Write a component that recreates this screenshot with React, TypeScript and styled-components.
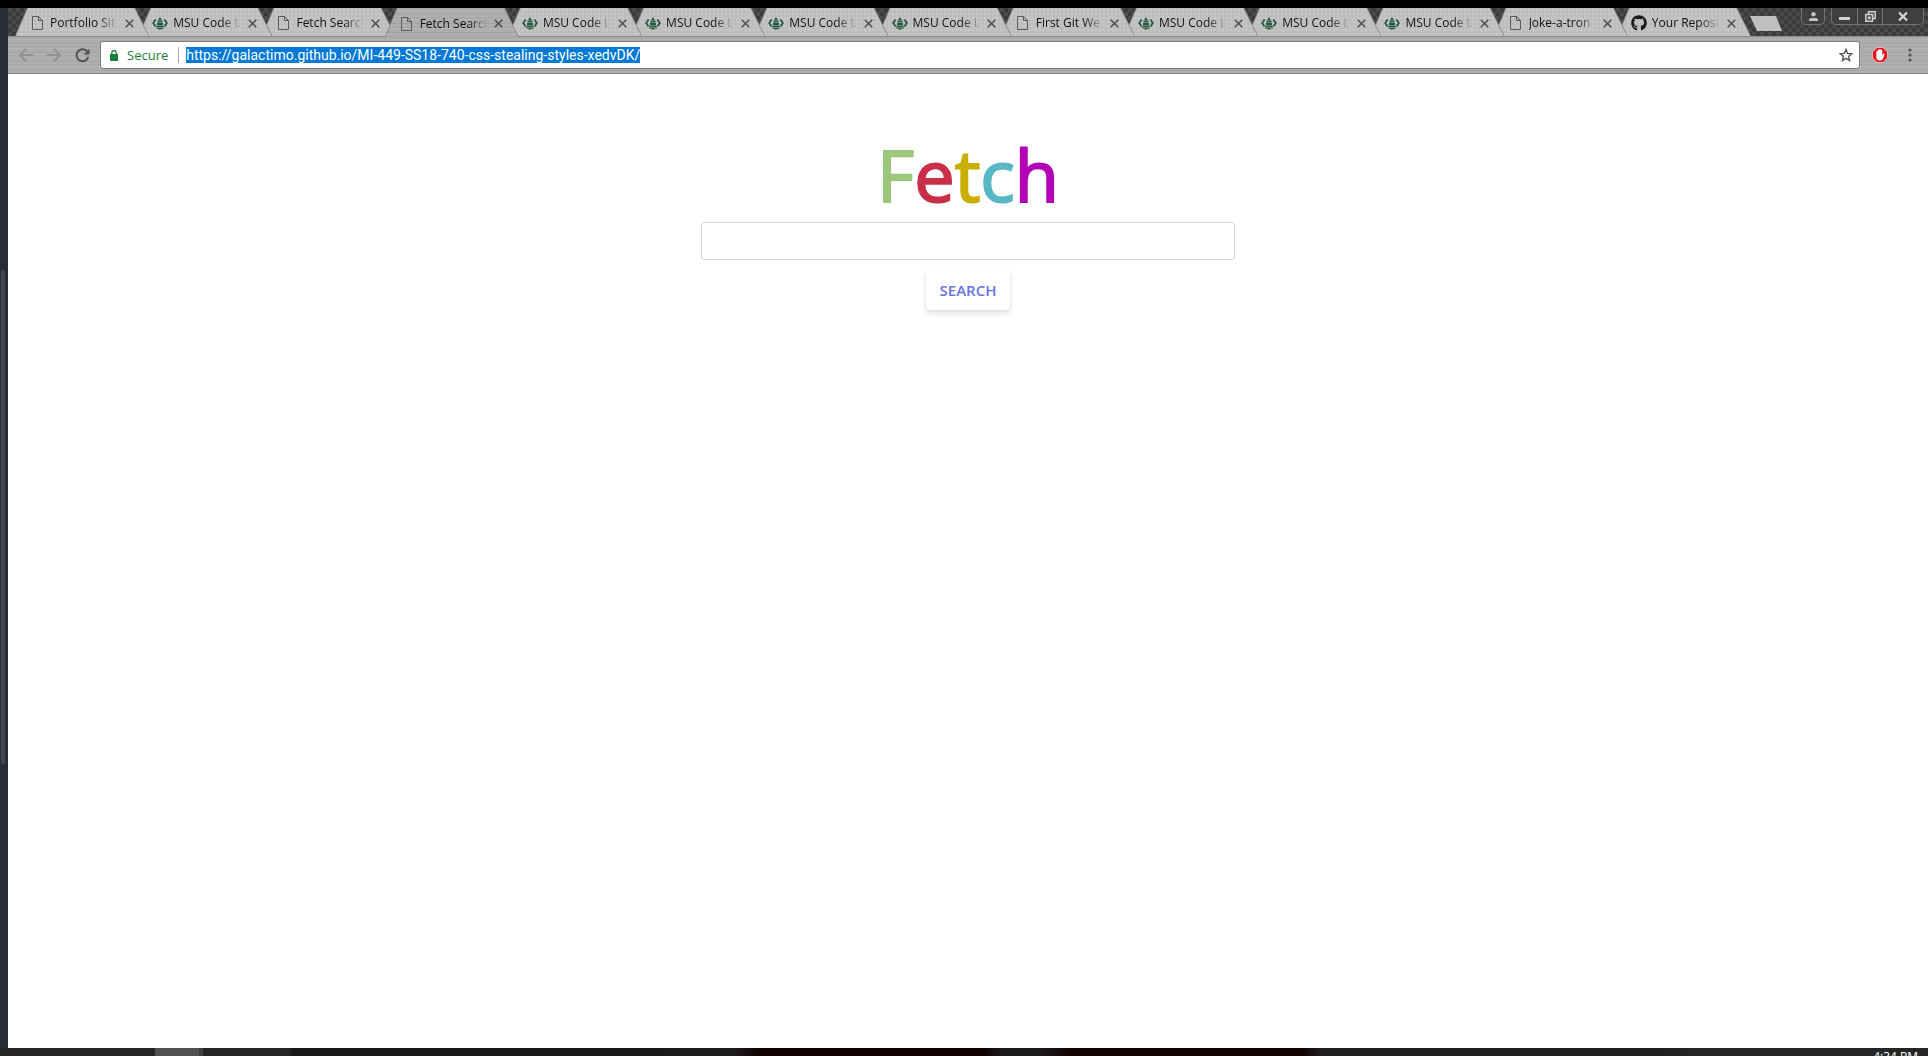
import React, { useEffect, useRef, useState } from "react";
import styled, { createGlobalStyle } from "styled-components";
import { FaGithub } from "react-icons/fa";

const ui = `"Open Sans", "Noto Sans", sans-serif`;

const GlobalStyle = createGlobalStyle`
  *, *::before, *::after { box-sizing: border-box; }
  body { margin: 0; background: #fff; font-family: ${ui}; }
  button { padding: 0; border: 0; background: none; font: inherit; color: inherit; display: flex; align-items: center; justify-content: center; }
  svg { display: block; flex: none; }
`;

const Screen = styled.div`
  display: flex;
  flex-direction: column;
  height: 100vh;
  overflow: hidden;
  padding-top: 8px;
  background: #000;
`;

const Desktop = styled.div`
  display: flex;
  flex: 1;
  min-height: 0;
`;

const EditorEdge = styled.aside`
  width: 8px;
  padding: 262px 3px 0 1px;
  background: #282c34;
`;

const ScrollThumb = styled.div`
  height: 495px;
  border-radius: 2px;
  background: #3e4451;
`;

const Browser = styled.div`
  display: flex;
  flex: 1;
  flex-direction: column;
  min-width: 0;
`;

const TabStrip = styled.header`
  display: flex;
  height: 29px;
  padding-left: 7px;
  border-bottom: 1px solid #8a8a8a;
  background: repeating-conic-gradient(#3b3b3b 0 25%, #4a4a4a 0 50%) 0 0 / 8px 8px;
`;

const Tabs = styled.nav`
  display: flex;
  flex: 1;
  max-width: 1736px;
  min-width: 0;
`;

const slant = "polygon(12px 0, calc(100% - 14px) 0, 100% 100%, 0 100%)";
const brushed = `repeating-linear-gradient(180deg, #a9a9a9 0 2px, #b3b3b3 2px 3px, #adadad 3px 6px, #a3a3a3 6px 7px, #b0b0b0 7px 9px)`;

const TabShape = styled.div<{ $active?: boolean; $order: number }>`
  position: relative;
  z-index: ${(p) => (p.$active ? 50 : p.$order)};
  flex: 1;
  min-width: 0;
  height: ${(p) => (p.$active ? 29 : 28)}px;
  margin-right: -11px;
  clip-path: ${slant};
  background: #8c8c8c;
  &:last-child { margin-right: 0; }
`;

const TabFace = styled.div<{ $active?: boolean }>`
  display: flex;
  align-items: center;
  height: 100%;
  margin: 0 1px;
  padding: 2px 14px 0 13px;
  clip-path: ${slant};
  background: ${(p) =>
    p.$active ? brushed : "radial-gradient(#c8c8c8 1px, #bebebe 1px) 0 0 / 4px 4px"};
`;

const TabIcon = styled.span`
  display: flex;
  justify-content: center;
  flex: none;
  width: 16px;
  margin-right: 5px;
`;

const TabTitle = styled.a`
  flex: 1;
  min-width: 0;
  margin-right: 4px;
  color: #111;
  font-size: 12px;
  line-height: 18px;
  text-decoration: none;
  white-space: nowrap;
  mask-image: linear-gradient(90deg, #000 48px, transparent 68px);
`;

const TabClose = styled.button`
  flex: none;
  width: 10px;
  height: 16px;
`;

const NewTab = styled.button`
  width: 32px;
  height: 15px;
  margin: 8px 0 0 -1px;
  clip-path: polygon(0 0, 26px 0, 100% 100%, 7px 100%);
  && { background: #bfbfbf; }
`;

const WindowControls = styled.div`
  display: flex;
  flex: none;
  gap: 6px;
  height: 17px;
  margin-left: auto;
  padding-right: 4px;
`;

const ControlGroup = styled.div`
  display: flex;
  overflow: hidden;
  border: 1px solid #747474;
  border-top: 0;
  border-radius: 0 0 5px 5px;
  background: #3f3f3f;
`;

const ControlButton = styled.button<{ $width: number }>`
  width: ${(p) => p.$width}px;
  & + & { border-left: 1px solid #747474; }
`;

const Toolbar = styled.div`
  display: flex;
  align-items: center;
  height: 37px;
  padding: 0 4px 0 10px;
  border-bottom: 1px solid #7c7c7c;
  background: ${brushed};
`;

const ToolButton = styled.button<{ $width?: number }>`
  flex: none;
  width: ${(p) => p.$width ?? 28}px;
  height: 28px;
`;

const AddressBar = styled.form`
  display: flex;
  align-items: center;
  flex: 1;
  min-width: 0;
  height: 28px;
  margin: 0 4px 0 10px;
  padding: 0 5px 0 9px;
  border: 1px solid #7d7d7d;
  border-radius: 3px;
  background: #fff;
`;

const Secure = styled.label`
  display: flex;
  align-items: center;
  gap: 9px;
  margin-right: 7px;
  padding-right: 10px;
  border-right: 1px solid #a8a8a8;
  color: #1a7f37;
  font-size: 13px;
  line-height: 16px;
`;

const Url = styled.input`
  flex: 1;
  min-width: 0;
  height: 20px;
  padding: 0;
  border: 0;
  outline: 0;
  background: none;
  color: #222;
  font-family: Roboto, ${ui};
  font-size: 14px;
  line-height: 19px;
  &::selection { background: #0078d7; color: #fff; }
`;

const Page = styled.main`
  display: flex;
  flex: 1;
  flex-direction: column;
  align-items: center;
  min-height: 0;
  padding-top: 52px;
  background: #fff;
`;

const Logo = styled.h1`
  margin: 0;
  font-size: 72px;
  font-weight: 400;
  line-height: 96px;
`;

const Letter = styled.span<{ $color: string }>`
  color: ${(p) => p.$color};
  -webkit-text-stroke: 2px ${(p) => p.$color};
`;

const SearchForm = styled.form`
  display: flex;
  flex-direction: column;
  align-items: center;
  gap: 10px;
  width: 100%;
`;

const SearchBox = styled.input`
  width: 534px;
  max-width: 90%;
  height: 38px;
  padding: 0 10px;
  border: 1px solid #d3d8d9;
  border-radius: 3px;
  font: inherit;
`;

const SearchButton = styled.button`
  && {
    height: 40px;
    padding: 0 14px;
    border-radius: 4px;
    background: #fff;
    box-shadow: 0 4px 6px rgba(50, 50, 93, 0.11), 0 1px 3px rgba(0, 0, 0, 0.08);
    color: #6772e5;
    font-size: 15px;
    font-weight: 600;
    text-transform: uppercase;
  }
`;

const Taskbar = styled.footer`
  display: flex;
  justify-content: space-between;
  height: 8px;
  padding: 0 10px 0 155px;
  overflow: hidden;
  background: linear-gradient(90deg, #262626 0 15%, #181818 15.2% 34%, #1d1d1d 36% 38%, #100002 39.5% 51%, #1c1a1a 52% 54%, #120204 55.5% 67.5%, #1e1e1e 68.5% 86%, #262626 88%);
`;

const TaskItem = styled.div`
  width: 48px;
  border-right: 4px solid #404040;
  background: #505050;
`;

const Clock = styled.time`
  padding-top: 1px;
  color: #fff;
  font-size: 12px;
  line-height: 16px;
`;

const DocIcon = () => (
  <svg width="11" height="14" viewBox="0 0 11 14" fill="none" stroke="#5a5a5a">
    <path d="M.5.5h6l4 4v9H.5zM6.5.5v4h4" />
  </svg>
);

const SpireIcon = () => (
  <svg width="16" height="14" viewBox="0 0 16 14" fill="#24573f">
    <path d="M8 1 6.200 4h3.600zM5.500 4.500h5V6.500h-5zM5 7h6v2H5zM4.500 9.500h7v1.500h-7zM4 11.500h8v1H4zM6.500 12.500h3v1h-3z" />
    <path d="M3.600 3.600 1.200 7l2.400 3.400M12.400 3.600 14.800 7l-2.400 3.400" fill="none" stroke="#24573f" strokeWidth="1.800" />
  </svg>
);

const CloseIcon = () => (
  <svg width="9" height="9" viewBox="0 0 9 9" stroke="#505050" strokeWidth="1.600">
    <path d="m.7.700 7.600 7.600M8.300.700.700 8.300" />
  </svg>
);

const Arrow = ({ flip }: { flip?: boolean }) => (
  <svg width="14" height="14" viewBox="0 0 14 14" fill="none" stroke="#8f8f8f" strokeWidth="1.800">
    <path d={flip ? "M0 7h13M7 1l6 6-6 6" : "M14 7H1M7 1 1 7l6 6"} />
  </svg>
);

const icons = {
  doc: <DocIcon />,
  msu: <SpireIcon />,
  github: <FaGithub size={16} color="#1b1b1b" />,
};

type TabInfo = { icon: keyof typeof icons; title: string; active?: boolean };

const msu: TabInfo = { icon: "msu", title: "MSU Code L" };
const tabs: TabInfo[] = [
  { icon: "doc", title: "Portfolio Sit" },
  msu,
  { icon: "doc", title: "Fetch Search" },
  { icon: "doc", title: "Fetch Search", active: true },
  msu,
  msu,
  msu,
  msu,
  { icon: "doc", title: "First Git We" },
  msu,
  msu,
  msu,
  { icon: "doc", title: "Joke-a-tron" },
  { icon: "github", title: "Your Reposi" },
];

const logo = [
  ["F", "#9bc67b"],
  ["e", "#c92f49"],
  ["t", "#c9ae00"],
  ["c", "#58b7c4"],
  ["h", "#b300b8"],
];

export default function App() {
  const urlRef = useRef<HTMLInputElement>(null);
  const [url, setUrl] = useState("https://galactimo.github.io/MI-449-SS18-740-css-stealing-styles-xedvDK/");

  useEffect(() => {
    urlRef.current?.focus();
    urlRef.current?.select();
  }, []);

  return (
    <Screen>
      <GlobalStyle />
      <Desktop>
        <EditorEdge>
          <ScrollThumb />
        </EditorEdge>
        <Browser>
          <TabStrip>
            <Tabs>
              {tabs.map((tab, i) => (
                <TabShape key={i} $active={tab.active} $order={tabs.length - i}>
                  <TabFace $active={tab.active}>
                    <TabIcon>{icons[tab.icon]}</TabIcon>
                    <TabTitle href="#">{tab.title}</TabTitle>
                    <TabClose aria-label="Close tab">
                      <CloseIcon />
                    </TabClose>
                  </TabFace>
                </TabShape>
              ))}
            </Tabs>
            <NewTab aria-label="New tab" />
            <WindowControls>
              <ControlGroup>
                <ControlButton $width={22} aria-label="Profile">
                  <svg width="9" height="9" viewBox="0 0 9 9" fill="#c4c4c4">
                    <circle cx="4.500" cy="2.200" r="2.200" />
                    <path d="M0 9V7.200C1 5.500 8 5.500 9 7.200V9z" />
                  </svg>
                </ControlButton>
              </ControlGroup>
              <ControlGroup>
                <ControlButton $width={25} aria-label="Minimize">
                  <svg width="11" height="10" viewBox="0 0 11 10">
                    <path d="M0 6h11v3H0z" fill="#d0d0d0" />
                  </svg>
                </ControlButton>
                <ControlButton $width={25} aria-label="Restore">
                  <svg width="11" height="11" viewBox="0 0 11 11" fill="none" stroke="#d0d0d0" strokeWidth="1.500">
                    <path d="M3.500 3V.800h6.700v6.700H8M.800 3.500h6.700v6.700H.800zM3.500 6.200h1.300v1.300H3.500z" />
                  </svg>
                </ControlButton>
                <ControlButton $width={41} aria-label="Close window">
                  <svg width="10" height="9" viewBox="0 0 10 9" stroke="#d6d6d6" strokeWidth="2.200">
                    <path d="m1 .500 8 8M9 .500l-8 8" />
                  </svg>
                </ControlButton>
              </ControlGroup>
            </WindowControls>
          </TabStrip>
          <Toolbar>
            <ToolButton $width={16} aria-label="Back">
              <Arrow />
            </ToolButton>
            <ToolButton $width={40} aria-label="Forward">
              <Arrow flip />
            </ToolButton>
            <ToolButton $width={16} aria-label="Reload">
              <svg width="15" height="15" viewBox="0 0 15 15">
                <path d="M12.700 4A6 6 0 1 0 13.400 8.800" fill="none" stroke="#555" strokeWidth="2" />
                <path d="M14.500.500v6H8.500z" fill="#555" />
              </svg>
            </ToolButton>
            <AddressBar onSubmit={(e) => e.preventDefault()}>
              <Secure htmlFor="address">
                <svg width="8" height="11" viewBox="0 0 8 11">
                  <path d="M0 4h8v7H0z" fill="#188038" />
                  <path d="M1.800 4.500V2.800a2.200 2.200 0 0 1 4.400 0v1.700" fill="none" stroke="#188038" strokeWidth="1.300" />
                </svg>
                Secure
              </Secure>
              <Url id="address" ref={urlRef} value={url} spellCheck={false} onChange={(e) => setUrl(e.target.value)} />
              <ToolButton type="button" $width={16} aria-label="Bookmark this page">
                <svg width="14" height="14" viewBox="0 0 14 14" fill="none" stroke="#555" strokeWidth="1.400">
                  <path d="m7 1.500 1.600 3.900 4.200.300-3.200 2.700 1 4.100L7 10.300l-3.600 2.200 1-4.100L1.200 5.700l4.200-.300z" />
                </svg>
              </ToolButton>
            </AddressBar>
            <ToolButton $width={32} aria-label="AdBlock">
              <svg width="16" height="16" viewBox="0 0 16 16">
                <path d="M5 .500h6L15.500 5v6L11 15.500H5L.500 11V5z" fill="#e3131b" stroke="#f4b5b5" />
                <path d="M4.300 8.500V4.600q.7-1 1.400 0V3q.8-1 1.500 0v-.6q.8-1 1.600 0V3q.8-.8 1.500 0v5.500l1-1.700q1-.8 1.400.200L10.900 12q-1 1.700-3.400 1.500Q4.300 13.200 4.300 10z" fill="#fff" />
              </svg>
            </ToolButton>
            <ToolButton aria-label="Menu">
              <svg width="4" height="14" viewBox="0 0 4 14" fill="#555">
                <circle cx="2" cy="2" r="1.600" />
                <circle cx="2" cy="7" r="1.600" />
                <circle cx="2" cy="12" r="1.600" />
              </svg>
            </ToolButton>
          </Toolbar>
          <Page>
            <Logo>
              {logo.map(([char, color]) => (
                <Letter key={char} $color={color}>
                  {char}
                </Letter>
              ))}
            </Logo>
            <SearchForm onSubmit={(e) => e.preventDefault()}>
              <SearchBox type="search" aria-label="Search" />
              <SearchButton>Search</SearchButton>
            </SearchForm>
          </Page>
        </Browser>
      </Desktop>
      <Taskbar>
        <TaskItem />
        <Clock>4:34 PM</Clock>
      </Taskbar>
    </Screen>
  );
}
